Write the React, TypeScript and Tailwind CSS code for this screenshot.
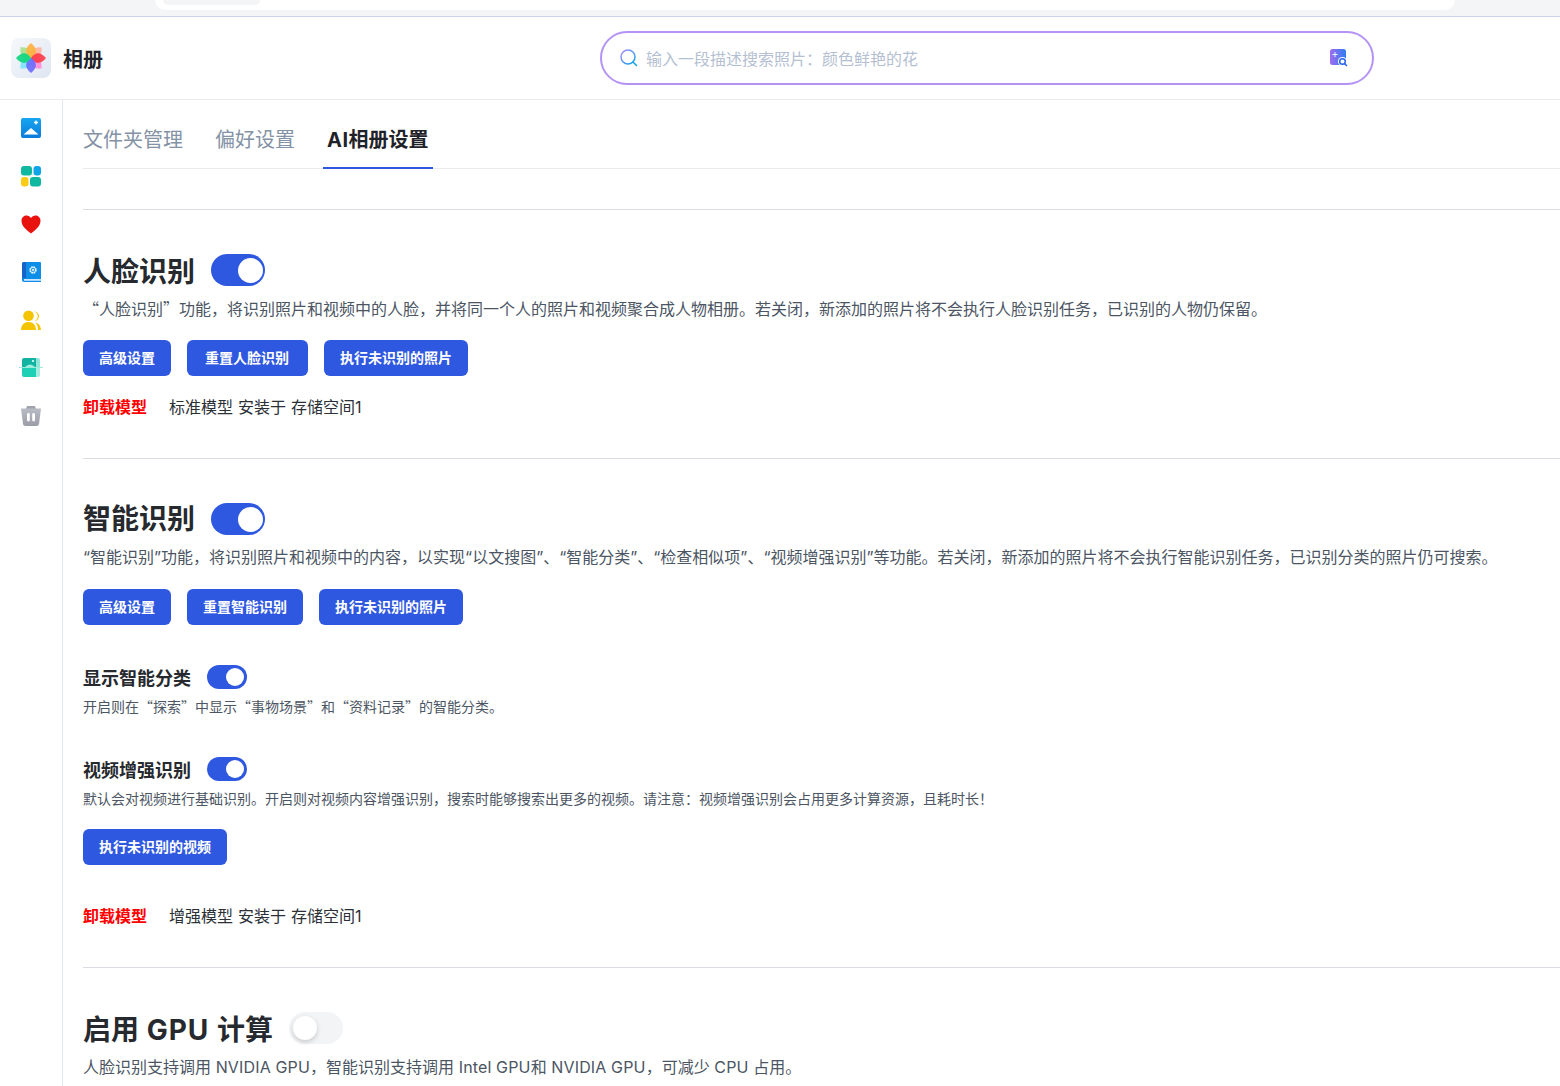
import * as React from "react"

function Toggle({ on = true, small = false }: { on?: boolean; small?: boolean }) {
  if (small) {
    return (
      <div className="flex h-6 w-10 items-center justify-end rounded-full bg-[#2f58e0] pr-[3px]">
        <div className="h-[18px] w-[18px] rounded-full bg-white" />
      </div>
    )
  }
  return (
    <div
      className={
        on
          ? "flex h-8 w-[54px] items-center justify-end rounded-full bg-[#2f58e0] pr-[2px]"
          : "flex h-8 w-[54px] items-center justify-start rounded-full bg-[#f3f4f6] pl-[4px]"
      }
    >
      <div
        className={
          on
            ? "h-[25px] w-[25px] rounded-full bg-white"
            : "h-6 w-6 rounded-full bg-white shadow-[0_2px_5px_rgba(0,0,0,0.18)]"
        }
      />
    </div>
  )
}

function Btn({ children, wide = false }: { children: React.ReactNode; wide?: boolean }) {
  return (
    <button
      className={
        wide
          ? "flex h-9 items-center rounded-md bg-[#2f58e0] pb-[2px] pl-[18px] pr-[19px] text-[14px] font-bold text-white"
          : "flex h-9 items-center rounded-md bg-[#2f58e0] px-4 pb-[2px] text-[14px] font-bold text-white"
      }
    >
      {children}
    </button>
  )
}

function Logo() {
  const petals = [
    ["#ffb5a0", 45],
    ["#ff8fd6", 135],
    ["#7fe3ff", 225],
    ["#a8e08c", 315],
    ["#ffb23e", 0],
    ["#ff3b4a", 90],
    ["#6a6cff", 180],
    ["#0fd67e", 270],
  ] as const
  return (
    <div className="flex h-10 w-10 items-center justify-center rounded-lg bg-gradient-to-br from-[#f6f8fb] to-[#dfe6f2]">
      <svg width="30" height="30" viewBox="0 0 30 30">
        {petals.map(([c, r]) => (
          <path
            key={r}
            d="M15 15 C8.500 11 8.500 5.500 15 0 C21.500 5.500 21.500 11 15 15Z"
            fill={c}
            opacity="0.92"
            transform={`rotate(${r} 15 15)`}
          />
        ))}
      </svg>
    </div>
  )
}

function SideIcon({ children }: { children: React.ReactNode }) {
  return <div className="flex h-12 w-full items-center justify-center">{children}</div>
}

function Sidebar() {
  return (
    <aside className="flex w-[63px] shrink-0 flex-col border-r border-[#e1e6ef] pt-[4px]">
      <SideIcon>
        <svg width="22" height="22" viewBox="0 0 22 22">
          <defs>
            <linearGradient id="pic" x1="0" y1="0" x2="0" y2="1">
              <stop offset="0" stopColor="#17a5f0" />
              <stop offset="1" stopColor="#0b7bdc" />
            </linearGradient>
          </defs>
          <rect x="1" y="1" width="20" height="20" rx="2" fill="url(#pic)" />
          <path d="M3.500 17.500 L11 11 L18.500 17.500Z" fill="#fff" />
          <path d="M16 3.500v4M14 5.500h4" stroke="#fff" strokeWidth="1.300" />
        </svg>
      </SideIcon>
      <SideIcon>
        <svg width="22" height="22" viewBox="0 0 22 22">
          <rect x="1" y="1" width="11" height="9.500" rx="3" fill="#10b8a0" />
          <rect x="13.500" y="1" width="7.500" height="9.500" rx="3" fill="#0ea5e9" />
          <rect x="1" y="12" width="7.500" height="9.500" rx="3" fill="#facc15" />
          <rect x="10" y="12" width="11" height="9.500" rx="3" fill="#10b8a0" />
        </svg>
      </SideIcon>
      <SideIcon>
        <svg width="22" height="22" viewBox="0 0 22 22">
          <path
            d="M11 20.500 C7 17.500 1.500 13.500 1.500 7.800 C1.500 4.500 4 2.500 6.600 2.500 C8.400 2.500 10 3.400 11 5 C12 3.400 13.600 2.500 15.400 2.500 C18 2.500 20.500 4.500 20.500 7.800 C20.500 13.500 15 17.500 11 20.500Z"
            fill="#e8120f"
          />
        </svg>
      </SideIcon>
      <SideIcon>
        <svg width="22" height="22" viewBox="0 0 22 22">
          <path d="M2 3 Q2 1 4 1 H20 Q21 1 21 2 V21 H4 Q2 21 2 19Z" fill="#0d8ee8" />
          <path d="M2 3 Q2 1 4 1 H6 V17 H2Z" fill="#1763c9" />
          <path d="M4 18 H21 V19.800 H4Z" fill="#cfe6ff" />
          <circle cx="13" cy="9" r="2.800" fill="none" stroke="#fff" strokeWidth="1.800" strokeDasharray="1.600 0.600" />
          <circle cx="13" cy="9" r="1" fill="#fff" />
        </svg>
      </SideIcon>
      <SideIcon>
        <svg width="22" height="22" viewBox="0 0 22 22">
          <path d="M14 2.500 A5 5 0 0 1 14.500 12 A4 4 0 0 0 14 2.500Z" fill="#f5c400" />
          <path d="M15.500 13.500 C18 14 20.500 16 21 21 H18 C18 18 17 15 15.500 13.500Z" fill="#f5c400" />
          <circle cx="8.500" cy="6.800" r="5.300" fill="#f5c400" />
          <path d="M1 21 C1 16 4 13 8.500 13 C13 13 16 16 16 21Z" fill="#f5c400" />
        </svg>
      </SideIcon>
      <SideIcon>
        <svg width="24" height="22" viewBox="0 0 24 22">
          <path d="M3 3 Q3 1 5 1 H17 V10 H3Z" fill="#12b3a0" />
          <path d="M17 1 H19 Q21 1 21 3 V10 H17Z" fill="#8ee5d8" />
          <path d="M3 11 H17 V20 H5 Q3 20 3 18Z" fill="#1fd0b6" />
          <path d="M17 11 H21 V18 Q21 20 19 20 H17Z" fill="#a5ece0" />
          <path d="M6 10 Q11 5 16 10Z" fill="#9cf0e0" />
          <circle cx="14" cy="4" r="1.100" fill="#e6fffa" />
          <path d="M0 10.500 H24" stroke="#9fe8dc" strokeWidth="1" />
        </svg>
      </SideIcon>
      <SideIcon>
        <svg width="22" height="22" viewBox="0 0 22 22">
          <defs>
            <linearGradient id="bin" x1="0" y1="0" x2="0" y2="1">
              <stop offset="0" stopColor="#b8bcc4" />
              <stop offset="1" stopColor="#9a9da6" />
            </linearGradient>
          </defs>
          <path d="M7 1 H15 L16 4 H6Z" fill="#9fa3ab" />
          <path d="M1 3.500 H21 L19 19 Q18.800 21 16.500 21 H5.500 Q3.200 21 3 19Z" fill="url(#bin)" />
          <rect x="7" y="8" width="2.800" height="8.500" rx="1.400" fill="#fff" />
          <rect x="12.200" y="8" width="2.800" height="8.500" rx="1.400" fill="#fff" />
        </svg>
      </SideIcon>
    </aside>
  )
}

function Header() {
  return (
    <header className="flex h-[83px] shrink-0 items-center border-b border-[#e8eaee] pl-[11px]">
      <Logo />
      <span className="ml-3 mt-[3px] text-[20px] font-bold text-[#1f2329]">相册</span>
      <div className="ml-[497px] flex h-[54px] w-[774px] items-center rounded-full border-2 border-[#b493f5] pl-[17px] pr-[23px]">
        <svg width="20" height="20" viewBox="0 0 20 20" fill="none">
          <defs>
            <linearGradient id="mag" x1="0" y1="0" x2="1" y2="1">
              <stop offset="0" stopColor="#a78bfa" />
              <stop offset="1" stopColor="#0ea5e9" />
            </linearGradient>
          </defs>
          <circle cx="9" cy="9" r="7" stroke="url(#mag)" strokeWidth="1.500" />
          <path d="M14 14 L17.500 17.500" stroke="#0ea5e9" strokeWidth="1.500" strokeLinecap="round" />
        </svg>
        <span className="ml-[7px] mt-[1px] flex-1 text-[16px] text-[#b4c0d2]">输入一段描述搜索照片：颜色鲜艳的花</span>
        <svg width="20" height="20" viewBox="0 0 20 20" fill="none">
          <defs>
            <linearGradient id="ai" x1="0" y1="0" x2="1" y2="0">
              <stop offset="0" stopColor="#a06cf0" />
              <stop offset="1" stopColor="#2f7df0" />
            </linearGradient>
          </defs>
          <rect x="1" y="1" width="16" height="16" rx="2.500" fill="url(#ai)" />
          <path d="M6 4v5M3.500 6.500h5" stroke="#dff" strokeWidth="1" />
          <circle cx="13.500" cy="13.500" r="4.500" fill="#fff" />
          <circle cx="13.500" cy="13.500" r="2.800" stroke="#2563eb" strokeWidth="1.500" />
          <path d="M15.500 15.500 L18 18" stroke="#2563eb" strokeWidth="1.500" />
        </svg>
      </div>
    </header>
  )
}

function Note({ name }: { name: string }) {
  return (
    <div className="flex items-center text-[16px] leading-6">
      <span className="font-bold text-[#ff0000]">卸载模型</span>
      <span className="ml-[22px] text-[#2b2f36] [word-spacing:0.5px]">{name} 安装于 存储空间1</span>
    </div>
  )
}

export default function App() {
  return (
    <div className="flex h-[1086px] w-full flex-col overflow-hidden bg-white [font-family:Inter,'Noto_Sans_CJK_SC',sans-serif]">
      <div className="h-[17px] shrink-0 border-b border-[#ccd3e8] bg-[#f3f5f7] pl-[155px] pr-[105px]">
        <div className="h-[10px] rounded-b-[14px] bg-white pl-[8px]">
          <div className="h-[5px] w-[97px] rounded-b-lg bg-[#f3f5f7]" />
        </div>
      </div>
      <Header />
      <div className="flex min-h-0 flex-1">
        <Sidebar />
        <main className="min-w-0 flex-1 pl-5">
          <nav className="flex h-[69px] gap-2 border-b border-[#e8eaee] text-[20px]">
            <div className="flex h-[69px] items-center pt-[10px] text-[#8492a6]">文件夹管理</div>
            <div className="ml-6 flex h-[69px] items-center pt-[10px] text-[#8492a6]">偏好设置</div>
            <div className="ml-[20px] flex h-[69px] items-center border-b-2 border-[#2f58e0] px-1 pt-[12px] font-bold text-[#1f2329]">
              <span className="tracking-[0.5px]">AI</span>相册设置
            </div>
          </nav>

          <section className="mt-10 border-t border-[#d9dde3] pt-[44px]">
            <div className="flex h-8 items-center gap-4">
              <h2 className="mt-[3px] text-[28px] font-bold text-[#26292e]">人脸识别</h2>
              <Toggle />
            </div>
            <p className="mt-[10px] h-6 text-[16px] leading-6 text-[#4b5563] [font-family:'Noto_Sans_CJK_SC',sans-serif]">
              “人脸识别”功能，将识别照片和视频中的人脸，并将同一个人的照片和视频聚合成人物相册。若关闭，新添加的照片将不会执行人脸识别任务，已识别的人物仍保留。
            </p>
            <div className="mt-5 flex gap-4">
              <Btn>高级设置</Btn>
              <Btn wide>重置人脸识别</Btn>
              <Btn>执行未识别的照片</Btn>
            </div>
            <div className="mt-[19px]">
              <Note name="标准模型" />
            </div>
          </section>

          <section className="mt-[39px] border-t border-[#d9dde3] pt-[44px]">
            <div className="flex h-8 items-center gap-4">
              <h2 className="text-[28px] font-bold text-[#26292e]">智能识别</h2>
              <Toggle />
            </div>
            <p className="mt-[10px] h-6 whitespace-nowrap text-[16px] leading-6 text-[#4b5563]">
              “智能识别”功能，将识别照片和视频中的内容，以实现“以文搜图”、“智能分类”、“检查相似项”、“视频增强识别”等功能。若关闭，新添加的照片将不会执行智能识别任务，已识别分类的照片仍可搜索。
            </p>
            <div className="mt-[20px] flex gap-4">
              <Btn>高级设置</Btn>
              <Btn>重置智能识别</Btn>
              <Btn>执行未识别的照片</Btn>
            </div>
            <div className="mt-[40px] flex h-6 items-center gap-4">
              <h3 className="mt-[2px] text-[18px] font-bold text-[#26292e]">显示智能分类</h3>
              <Toggle small />
            </div>
            <p className="mt-[7px] text-[14px] leading-5 text-[#4b5563] [font-family:'Noto_Sans_CJK_SC',sans-serif]">
              开启则在“探索”中显示“事物场景”和“资料记录”的智能分类。
            </p>
            <div className="mt-[41px] flex h-6 items-center gap-4">
              <h3 className="mt-[2px] text-[18px] font-bold text-[#26292e]">视频增强识别</h3>
              <Toggle small />
            </div>
            <p className="mt-2 text-[14px] leading-5 text-[#4b5563]">
              默认会对视频进行基础识别。开启则对视频内容增强识别，搜索时能够搜索出更多的视频。请注意：视频增强识别会占用更多计算资源，且耗时长！
            </p>
            <div className="mt-5 flex">
              <Btn>执行未识别的视频</Btn>
            </div>
            <div className="mt-[39px]">
              <Note name="增强模型" />
            </div>
          </section>

          <section className="mt-[39px] border-t border-[#d9dde3] pt-[44px]">
            <div className="flex h-8 items-center gap-4">
              <h2 className="mt-[3px] text-[28px] font-bold text-[#26292e]">
                启用<span className="tracking-[1px]"> GPU </span>计算
              </h2>
              <Toggle on={false} />
            </div>
            <p className="mt-[11px] h-6 text-[16px] leading-6 text-[#4b5563]">
              人脸识别支持调用<span className="tracking-[0.15px]"> NVIDIA GPU</span>，智能识别支持调用
              <span className="tracking-[0.15px]"> Intel GPU</span>和<span className="tracking-[0.15px]"> NVIDIA GPU</span>
              ，可减少<span className="tracking-[0.15px]"> CPU </span>占用。
            </p>
          </section>
        </main>
      </div>
    </div>
  )
}
